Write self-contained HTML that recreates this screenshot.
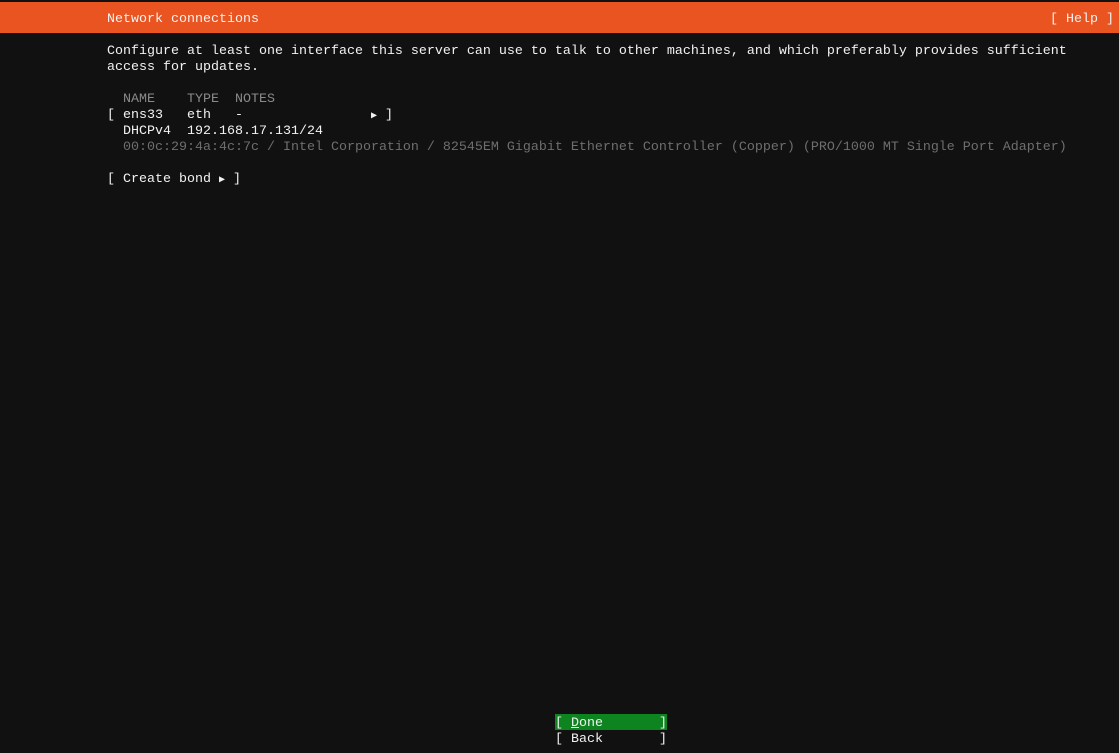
<!DOCTYPE html>
<html><head><meta charset="utf-8"><style>
html,body{margin:0;padding:0;background:#111111;width:1119px;height:753px;overflow:hidden}
.bar{position:absolute;left:0;top:2px;width:1119px;height:31px;background:#E95420}
.l{position:absolute;left:107px;height:16px;line-height:16px;font-family:"Liberation Mono",monospace;font-size:13.33px;color:#f2f2f2;white-space:pre}
.g{color:#8a8a8a}
.d{color:#6e6e6e}
.done{background:#0E8420}
.t{font-size:10px}
</style></head><body>
<div class="bar"></div>
<div class="l" style="top:12px">Network connections</div>
<div class="l" style="top:12px;left:1050px">[ Help ]</div>
<div class="l" style="top:44px">Configure at least one interface this server can use to talk to other machines, and which preferably provides sufficient</div>
<div class="l" style="top:60px">access for updates.</div>
<div class="l g" style="top:92px">  NAME    TYPE  NOTES</div>
<div class="l" style="top:108px">[ ens33   eth   -                <span class="t">▶</span> ]</div>
<div class="l" style="top:124px">  DHCPv4  192.168.17.131/24</div>
<div class="l d" style="top:140px">  00:0c:29:4a:4c:7c / Intel Corporation / 82545EM Gigabit Ethernet Controller (Copper) (PRO/1000 MT Single Port Adapter)</div>
<div class="l" style="top:172px">[ Create bond <span class="t">▶</span> ]</div>
<div class="l done" style="top:714px;left:555px;height:16px;width:112px"></div>
<div class="l" style="top:716px;left:555px">[ <u>D</u>one       ]</div>
<div class="l" style="top:732px;left:555px">[ Back       ]</div>
</body></html>
